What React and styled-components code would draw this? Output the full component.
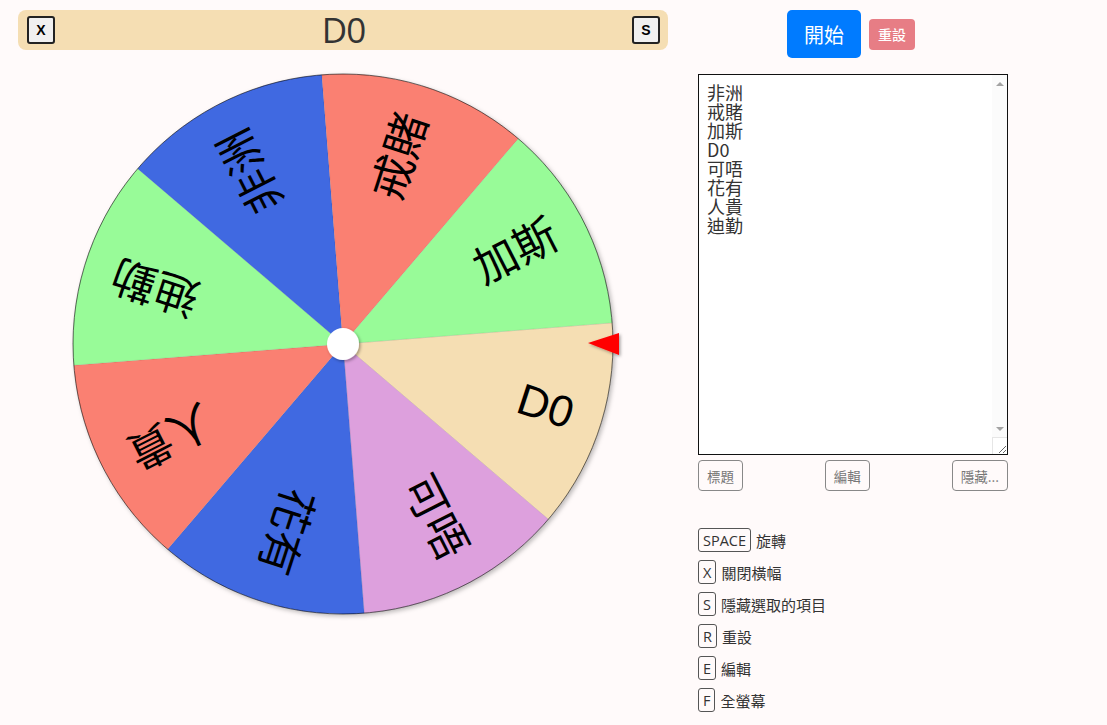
import React from "react";
import styled, { createGlobalStyle } from "styled-components";

const GlobalStyle = createGlobalStyle`
  html, body { margin: 0; padding: 0; background: #fffafa; }
  body { font-family: "Open Sans", "Noto Sans CJK TC", sans-serif; color: #333; }
`;

const Page = styled.div`
  display: flex;
  align-items: flex-start;
  gap: 30px;
  padding: 10px 18px;
`;

const LeftCol = styled.div`
  width: 650px;
  display: flex;
  flex-direction: column;
`;

const Banner = styled.div`
  height: 40px;
  background: #f5deb3;
  border-radius: 8px;
  display: flex;
  align-items: center;
  justify-content: space-between;
  padding: 0 8px 0 9px;
`;

const BannerTitle = styled.div`
  font-family: "Open Sans", "Noto Sans CJK TC", sans-serif;
  font-size: 35px;
  line-height: 40px;
  color: #333;
  letter-spacing: -1px;
`;

const SquareBtn = styled.button`
  width: 28px;
  height: 28px;
  padding: 0;
  border: 2px solid #222;
  border-radius: 3px;
  background: #f0f0f0;
  font-family: "Liberation Sans", sans-serif;
  font-weight: bold;
  font-size: 14px;
  color: #000;
  display: flex;
  align-items: center;
  justify-content: center;
`;

const WheelSvg = styled.svg`
  display: block;
  margin-top: 4px;
`;

const RightCol = styled.div`
  width: 310px;
  display: flex;
  flex-direction: column;
`;

const ActionRow = styled.div`
  display: flex;
  justify-content: center;
  align-items: center;
  gap: 8px;
  height: 48px;
  padding-right: 4px;
`;

const StartBtn = styled.button`
  width: 74px;
  height: 48px;
  border: none;
  border-radius: 5px;
  background: #007bff;
  color: #fff;
  font-family: "Noto Sans CJK TC", sans-serif;
  font-size: 20px;
  padding: 0;
`;

const ResetBtn = styled.button`
  width: 46px;
  height: 31px;
  border: none;
  border-radius: 4px;
  background: #e77d85;
  color: #fff;
  font-family: "Noto Sans CJK TC", sans-serif;
  font-weight: 500;
  font-size: 14px;
  padding: 0;
`;

const AreaWrap = styled.div`
  position: relative;
  margin-top: 16px;
  width: 310px;
  height: 381px;
`;

const ListArea = styled.textarea`
  display: block;
  width: 310px;
  height: 381px;
  box-sizing: border-box;
  border: 1px solid #111;
  background: #fff;
  padding: 8px 24px 8px 8px;
  font-family: "Noto Sans CJK TC", sans-serif;
  font-size: 18px;
  line-height: 19px;
  color: #333;
  resize: both;
  outline: none;
`;

const ScrollLane = styled.div`
  position: absolute;
  top: 1px;
  right: 1px;
  bottom: 18px;
  width: 15px;
  background: #fbfbfb;
  display: flex;
  flex-direction: column;
  justify-content: space-between;
  align-items: center;
  padding: 7px 0 6px;
  box-sizing: border-box;
  pointer-events: none;
`;

const Arrow = styled.span`
  width: 0;
  height: 0;
  border-left: 4px solid transparent;
  border-right: 4px solid transparent;
  ${(p) =>
    p.$dir === "up"
      ? "border-bottom: 4px solid #a3a3a3;"
      : "border-top: 4px solid #a3a3a3;"}
`;

const Corner = styled.div`
  position: absolute;
  right: 1px;
  bottom: 1px;
  width: 15px;
  height: 17px;
  border-top: 1px solid #e6e6e6;
  border-left: 1px solid #e6e6e6;
  box-sizing: border-box;
  pointer-events: none;
`;

const SmallRow = styled.div`
  margin-top: 5px;
  display: flex;
  justify-content: space-between;
`;

const GhostBtn = styled.button`
  height: 31px;
  padding: 0 8px;
  border: 1px solid #888;
  border-radius: 4px;
  background: transparent;
  color: #777;
  font-family: "Noto Sans CJK TC", sans-serif;
  font-size: 13.5px;
`;

const Shortcuts = styled.div`
  margin-top: 37px;
  display: flex;
  flex-direction: column;
  gap: 8px;
`;

const ShortcutRow = styled.div`
  display: flex;
  align-items: center;
  gap: 5px;
  height: 24px;
  font-family: "Noto Sans CJK TC", sans-serif;
  font-size: 15px;
  color: #333;
`;

const Kbd = styled.span`
  box-sizing: border-box;
  height: 24px;
  display: inline-flex;
  align-items: center;
  padding: 0 4px;
  border: 1px solid #555;
  border-radius: 3px;
  font-family: "Open Sans", sans-serif;
  font-size: 14.5px;
  color: #333;
`;

const segments = [
  { label: "D0", color: "#f5deb3" },
  { label: "可唔", color: "#dda0dd" },
  { label: "花有", color: "#4169e1" },
  { label: "人貴", color: "#fa8072" },
  { label: "迪勤", color: "#98fb98" },
  { label: "非洲", color: "#4169e1" },
  { label: "戒賭", color: "#fa8072" },
  { label: "加斯", color: "#98fb98" },
];

const R = 270;
const START = -4.5;
const rad = (d) => (d * Math.PI) / 180;

function slicePath(a0, a1) {
  const x0 = R * Math.cos(rad(a0));
  const y0 = R * Math.sin(rad(a0));
  const x1 = R * Math.cos(rad(a1));
  const y1 = R * Math.sin(rad(a1));
  return `M0 0 L${x0.toFixed(2)} ${y0.toFixed(2)} A${R} ${R} 0 0 1 ${x1.toFixed(2)} ${y1.toFixed(2)} Z`;
}

function Wheel() {
  return (
    <WheelSvg width="650" height="600" viewBox="0 0 650 600">
      <defs>
        <filter id="ws" x="-10%" y="-10%" width="120%" height="120%">
          <feDropShadow dx="2" dy="2" stdDeviation="2" floodColor="#000" floodOpacity="0.25" />
        </filter>
        <filter id="ps" x="-50%" y="-50%" width="200%" height="200%">
          <feDropShadow dx="1.5" dy="1.5" stdDeviation="1.5" floodColor="#000" floodOpacity="0.35" />
        </filter>
      </defs>
      <g transform="translate(325 290)">
        <g filter="url(#ws)">
          <circle r={R} fill="#fff" />
          {segments.map((s, i) => {
            const a0 = START + i * 45;
            return (
              <path
                key={i}
                d={slicePath(a0, a0 + 45)}
                fill={s.color}
                stroke="rgba(0,0,0,0.12)"
                strokeWidth="0.6"
              />
            );
          })}
          <circle r={R} fill="none" stroke="rgba(0,0,0,0.55)" strokeWidth="1" />
        </g>
        {segments.map((s, i) => {
          const mid = START + i * 45 + 22.5;
          return (
            <text
              key={"t" + i}
              transform={`rotate(${mid})`}
              x={240}
              y={-4}
              textAnchor="end"
              dominantBaseline="central"
              fontSize="44"
              fontFamily='"Liberation Sans", "Noto Sans CJK TC", sans-serif'
              fill="#000"
            >
              {s.label}
            </text>
          );
        })}
        <circle r={16} fill="#fff" filter="url(#ps)" />
        <polygon points="245,-1 276,-11 276,11" fill="#ff0000" filter="url(#ps)" />
      </g>
    </WheelSvg>
  );
}

const shortcuts = [
  ["SPACE", "旋轉"],
  ["X", "關閉橫幅"],
  ["S", "隱藏選取的項目"],
  ["R", "重設"],
  ["E", "編輯"],
  ["F", "全螢幕"],
];

export default function App() {
  return (
    <>
      <GlobalStyle />
      <Page>
        <LeftCol>
          <Banner>
            <SquareBtn>X</SquareBtn>
            <BannerTitle>D0</BannerTitle>
            <SquareBtn>S</SquareBtn>
          </Banner>
          <Wheel />
        </LeftCol>
        <RightCol>
          <ActionRow>
            <StartBtn>開始</StartBtn>
            <ResetBtn>重設</ResetBtn>
          </ActionRow>
          <AreaWrap>
            <ListArea
              defaultValue={"非洲\n戒賭\n加斯\nD0\n可唔\n花有\n人貴\n迪勤"}
              spellCheck={false}
            />
            <ScrollLane>
              <Arrow $dir="up" />
              <Arrow $dir="down" />
            </ScrollLane>
            <Corner />
          </AreaWrap>
          <SmallRow>
            <GhostBtn>標題</GhostBtn>
            <GhostBtn>編輯</GhostBtn>
            <GhostBtn>隱藏...</GhostBtn>
          </SmallRow>
          <Shortcuts>
            {shortcuts.map(([k, l]) => (
              <ShortcutRow key={k}>
                <Kbd>{k}</Kbd>
                <span>{l}</span>
              </ShortcutRow>
            ))}
          </Shortcuts>
        </RightCol>
      </Page>
    </>
  );
}
